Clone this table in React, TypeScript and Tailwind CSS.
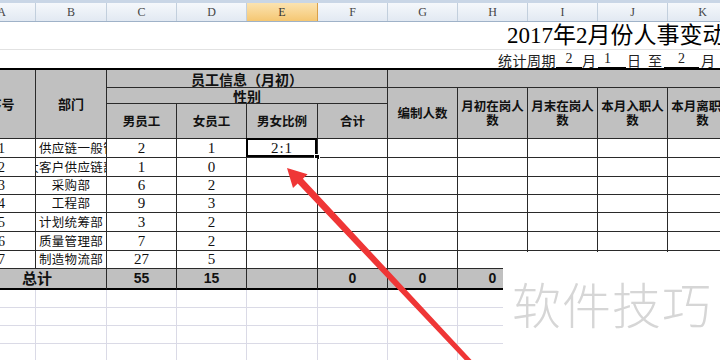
import React from 'react';

const cols = [
  { key: 'A', w: 'w-[68px]' },
  { key: 'B', w: 'w-[71px]' },
  { key: 'C', w: 'w-[70px]' },
  { key: 'D', w: 'w-[70px]' },
  { key: 'E', w: 'w-[71px]' },
  { key: 'F', w: 'w-[70px]' },
  { key: 'G', w: 'w-[70px]' },
  { key: 'H', w: 'w-[70px]' },
  { key: 'I', w: 'w-[70px]' },
  { key: 'J', w: 'w-[70px]' },
  { key: 'K', w: 'w-[70px]' },
];

const rows = [
  { no: '1', dept: '供应链一般管理部', left: true, m: '2', f: '1', ratio: '2:1' },
  { no: '2', dept: '大客户供应链部', m: '1', f: '0' },
  { no: '3', dept: '采购部', m: '6', f: '2' },
  { no: '4', dept: '工程部', m: '9', f: '3' },
  { no: '5', dept: '计划统筹部', m: '3', f: '2' },
  { no: '6', dept: '质量管理部', m: '7', f: '2' },
  { no: '7', dept: '制造物流部', m: '27', f: '5' },
];

const cjk = "font-['Noto_Sans_CJK_SC',sans-serif]";
const num = "font-['Liberation_Serif','Noto_Sans_CJK_SC',serif]";

const head = 'bg-[#c0c0c0] border-r border-b border-[#2a2a2a] flex items-center justify-center text-center font-bold text-[12.5px] leading-[14px] text-[#111] overflow-hidden';
const cell = 'bg-white border-r border-b border-[#2a2a2a] flex items-center justify-center overflow-hidden whitespace-nowrap text-[#111]';
const total = 'bg-[#c0c0c0] border-r border-b-2 border-[#2a2a2a] border-b-black flex items-center justify-center font-bold text-[14px] text-[#111]';
const blank = 'border-r border-b border-[#dadae6]';

function Arrow() {
  return (
    <svg className="absolute left-0 top-0 pointer-events-none" width="720" height="360" viewBox="0 0 720 360">
      <polygon
        points="287,168 307.6,174.3 302.9,178.7 471.8,360.3 468.2,363.7 297.7,183.5 293,187.9"
        fill="#ef3636"
      />
    </svg>
  );
}

export default function App() {
  return (
    <div className={`relative w-[720px] h-[360px] overflow-hidden bg-white ${cjk}`}>
      <div className="-ml-[32px] w-[770px] flex flex-col">
        {/* column letters */}
        <div className="h-[3px] bg-[#c9d6e6]" />
        <div className="flex h-[19px] border-b border-[#9fb2c8]">
          {cols.map((c) => (
            <div
              key={c.key}
              className={`${c.w} shrink-0 border-r flex items-center justify-center text-[12px] ${num} ${
                c.key === 'E'
                  ? 'bg-gradient-to-b from-[#fbe3b0] to-[#f5c772] border-[#d9a04a] text-[#333]'
                  : 'bg-gradient-to-b from-[#f5f8fb] to-[#e2e9f2] border-[#c2cfdd] text-[#444]'
              }`}
            >
              {c.key}
            </div>
          ))}
        </div>

        {/* title rows */}
        <div className="h-[28px] border-b border-[#e2e2e2] flex items-center pl-[539px] whitespace-nowrap">
          <span className={`text-[23px] leading-none text-black ${num}`}>2017年2月份人事变动表</span>
        </div>
        <div className="h-[18px] flex items-end pl-[530px] whitespace-nowrap text-[14px] leading-[16px] text-[#222]">
          <span className="w-[58px] shrink-0 tracking-[0.5px]">统计周期</span>
          <span className={`w-[26px] shrink-0 text-center border-b border-black ${num}`}>2</span>
          <span className="w-[16px] shrink-0">月</span>
          <span className={`w-[28px] shrink-0 pl-[6px] border-b border-black ${num}`}>1</span>
          <span className="w-[22px] shrink-0 pl-[1px]">日</span>
          <span className="w-[16px] shrink-0">至</span>
          <span className={`w-[35px] shrink-0 text-center border-b border-black ${num}`}>2</span>
          <span className="w-[20px] shrink-0 pl-[2px]">月</span>
        </div>

        {/* table */}
        <div className="grid grid-cols-[68px_71px_70px_70px_71px_70px_70px_70px_70px_70px_70px] grid-rows-[18px_16px_35px_19px_19px_18px_18px_19px_19px_18px_21px_18px_18px_18px_18px] border-t-2 border-black">
          <div className={`${head} row-span-3 text-[13px]`}>序号</div>
          <div className={`${head} row-span-3 text-[13px]`}>部门</div>
          <div className={`${head} col-span-4 text-[14px]`}>员工信息（月初）</div>
          <div className={`${head} col-span-5`} />
          <div className={`${head} col-span-4 text-[14px]`}>性别</div>
          <div className={`${head} row-span-2`}>编制人数</div>
          <div className={`${head} row-span-2 px-[3px]`}>月初在岗人数</div>
          <div className={`${head} row-span-2 px-[3px]`}>月末在岗人数</div>
          <div className={`${head} row-span-2 px-[3px]`}>本月入职人数</div>
          <div className={`${head} row-span-2 px-[3px]`}>本月离职人数</div>
          <div className={head}>男员工</div>
          <div className={head}>女员工</div>
          <div className={head}>男女比例</div>
          <div className={head}>合计</div>

          {rows.map((r) => (
            <React.Fragment key={r.no}>
              <div className={`${cell} text-[14px] ${num}`}>{r.no}</div>
              <div className={`${cell} text-[12.5px] tracking-[0.3px] ${r.left ? 'justify-start pl-[3px]' : ''}`}>
                {r.dept}
              </div>
              <div className={`${cell} text-[15px] ${num}`}>{r.m}</div>
              <div className={`${cell} text-[15px] ${num}`}>{r.f}</div>
              <div className={`${cell} relative overflow-visible text-[15px] tracking-[1px] ${num}`}>
                {r.ratio}
                {r.ratio && (
                  <>
                    <div className="absolute -left-[1px] -top-[1px] right-0 bottom-0 border-2 border-black" />
                    <div className="absolute -right-[3px] -bottom-[3px] w-[6px] h-[6px] bg-black border border-white" />
                  </>
                )}
              </div>
              <div className={cell} />
              <div className={cell} />
              <div className={cell} />
              <div className={cell} />
              <div className={cell} />
              <div className={cell} />
            </React.Fragment>
          ))}

          <div className={`${total} col-span-2 text-[15px]`}>总计</div>
          <div className={`${total} font-['Liberation_Sans_Narrow','Liberation_Sans',sans-serif]`}>55</div>
          <div className={`${total} font-['Liberation_Sans_Narrow','Liberation_Sans',sans-serif]`}>15</div>
          <div className={total} />
          <div className={`${total} text-[13px] font-['Liberation_Sans',sans-serif]`}>0</div>
          <div className={`${total} text-[13px] font-['Liberation_Sans',sans-serif]`}>0</div>
          <div className={`${total} text-[13px] font-['Liberation_Sans',sans-serif]`}>0</div>
          <div className={total} />
          <div className={total} />
          <div className={total} />

          {[0, 1, 2, 3].map((i) => (
            <React.Fragment key={i}>
              {cols.map((c) => (
                <div key={c.key} className={blank} />
              ))}
            </React.Fragment>
          ))}
        </div>
      </div>

      {/* watermark */}
      <div className="absolute left-[503px] top-[252px] w-[217px] h-[108px] bg-white flex items-start pt-[26px] pl-[9px]">
        <span className="text-[49px] leading-none font-light text-[#d6d6d6] tracking-[1px]">软件技巧</span>
      </div>

      <Arrow />
    </div>
  );
}
